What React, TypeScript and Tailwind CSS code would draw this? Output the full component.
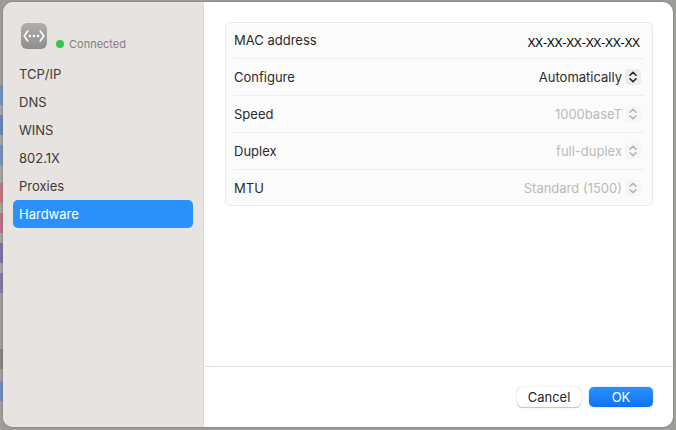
import React, { useState } from 'react';

interface SelectField {
  id: string;
  label: string;
  options: string[];
  disabled?: boolean;
}

const SECTIONS = ['TCP/IP', 'DNS', 'WINS', '802.1X', 'Proxies', 'Hardware'];

const FIELDS: SelectField[] = [
  { id: 'configure', label: 'Configure', options: ['Automatically', 'Manually'] },
  { id: 'speed', label: 'Speed', options: ['1000baseT'], disabled: true },
  { id: 'duplex', label: 'Duplex', options: ['full-duplex'], disabled: true },
  { id: 'mtu', label: 'MTU', options: ['Standard (1500)'], disabled: true },
];

// Slices of the settings window that stay visible behind the sheet
const BACKDROP = [
  'h-[85px] bg-[#a09a98]',
  'h-5 bg-[#6e8fc0]',
  'h-[10px] bg-[#a5a3a1]',
  'h-5 bg-[#6485b8]',
  'h-[10px] bg-[#a5a3a1]',
  'h-5 bg-[#7590b8]',
  'h-[18px] bg-[#a5a3a1]',
  'h-5 bg-[#bf7480]',
  'h-[10px] bg-[#a5a3a1]',
  'h-5 bg-[#b9707f]',
  'h-[10px] bg-[#a5a3a1]',
  'h-5 bg-[#7871a8]',
  'h-[10px] bg-[#a5a3a1]',
  'h-5 bg-[#7d76a6]',
  'h-14 bg-[#a09e9b]',
  'h-5 bg-[#85827f]',
  'h-3 bg-[#a09e9b]',
  'h-5 bg-[#6c8cbd]',
];

const EthernetIcon: React.FC = () => (
  <svg className="h-[26px] w-[26px]" viewBox="0 0 26 26" fill="none" aria-hidden="true">
    <defs>
      <linearGradient id="ethernet-fill" x1="0" y1="0" x2="0" y2="1">
        <stop offset="0" stopColor="#b0afad" />
        <stop offset="1" stopColor="#8f8e8d" />
      </linearGradient>
    </defs>
    <rect width="26" height="26" rx="6" fill="url(#ethernet-fill)" />
    <path
      d="M6.8 8 3.2 13l3.6 5M19.2 8l3.6 5-3.6 5"
      stroke="white"
      strokeWidth="1.6"
      strokeLinecap="round"
      strokeLinejoin="round"
    />
    <circle cx="8.9" cy="13" r="1.2" fill="white" />
    <circle cx="13" cy="13" r="1.2" fill="white" />
    <circle cx="17.1" cy="13" r="1.2" fill="white" />
  </svg>
);

const Stepper: React.FC<{ disabled?: boolean }> = ({ disabled }) => (
  <svg
    className={`h-4 w-4 rounded ${disabled ? 'bg-[#f6f6f6] text-[#b3b3b3]' : 'bg-[#ececec] text-[#262626]'}`}
    viewBox="0 0 16 16"
    fill="none"
    stroke="currentColor"
    strokeWidth="1.6"
    strokeLinecap="round"
    strokeLinejoin="round"
    aria-hidden="true"
  >
    <path d="M5 6.2 8 3.2l3 3M5 9.8l3 3 3-3" />
  </svg>
);

export default function App() {
  const [section, setSection] = useState('Hardware');

  return (
    <div className="relative isolate flex min-h-screen bg-[#9f9d9a] px-[3px] pt-[2px] pb-[3px] font-['Inter','Liberation_Sans',sans-serif] text-[13px] leading-4">
      <div className="absolute inset-y-0 left-0 -z-10 w-3 overflow-hidden" aria-hidden="true">
        {BACKDROP.map((slice, i) => (
          <div key={i} className={slice} />
        ))}
      </div>

      <div className="flex flex-1 overflow-hidden rounded-[10px] bg-white shadow-[0_0_2px_#6b6967]">
        {/* Sidebar */}
        <aside className="w-[201px] shrink-0 border-r border-[#dcdad6] bg-[#e6e3e0] px-[10px] pt-[21px]">
          <div className="flex items-start gap-[9px] pl-2">
            <EthernetIcon />
            <div className="flex items-center gap-[5px] pt-[13px] text-[11px] text-[#82807e]">
              <span className="h-2 w-2 rounded-full bg-[#35c649]" />
              Connected
            </div>
          </div>
          <nav className="mt-2 flex flex-col">
            {SECTIONS.map((name) => (
              <button
                key={name}
                type="button"
                onClick={() => setSection(name)}
                className={`h-7 rounded-[5px] px-[6px] text-left ${
                  section === name ? 'bg-[#2a91fb] text-white' : 'text-[#3c3a39]'
                }`}
              >
                {name}
              </button>
            ))}
          </nav>
        </aside>

        <div className="flex min-w-0 flex-1 flex-col">
          {/* Hardware settings */}
          <main className="flex-1 px-5 pt-5 pl-[21px]">
            <div className="rounded-[5px] bg-[#fbfbfb] px-[9px] text-[#2b2b2b] ring-1 ring-[#ebebeb] ring-inset">
              <div className="flex h-9 items-center justify-between pr-1">
                <span>MAC address</span>
                <span className="pt-1 font-['Noto_Sans',sans-serif] text-[13px] text-black">XX-XX-XX-XX-XX-XX</span>
              </div>
              {FIELDS.map((field) => (
                <div
                  key={field.id}
                  className="flex h-[37px] items-center justify-between border-t border-[#eeeeee] pr-[3px]"
                >
                  <label htmlFor={field.id}>{field.label}</label>
                  <div className="flex items-center gap-[3px]">
                    <select
                      id={field.id}
                      disabled={field.disabled}
                      className="field-sizing-content appearance-none bg-transparent text-right disabled:text-[#bababa] disabled:opacity-100"
                    >
                      {field.options.map((option) => (
                        <option key={option}>{option}</option>
                      ))}
                    </select>
                    <Stepper disabled={field.disabled} />
                  </div>
                </div>
              ))}
            </div>
          </main>

          {/* Footer */}
          <footer className="flex justify-end gap-2 border-t border-[#e2e2e2] px-5 py-5">
            <button
              type="button"
              className="h-5 w-16 rounded-[5px] bg-white text-[#262626] shadow-[0_0_1px_#00000066,0_1px_1px_#00000033]"
            >
              Cancel
            </button>
            <button
              type="button"
              className="h-5 w-16 rounded-[5px] bg-linear-to-b from-[#2a8ffb] to-[#0a74f5] text-white shadow-[0_0_1px_#0a74f5]"
            >
              OK
            </button>
          </footer>
        </div>
      </div>
    </div>
  );
}
